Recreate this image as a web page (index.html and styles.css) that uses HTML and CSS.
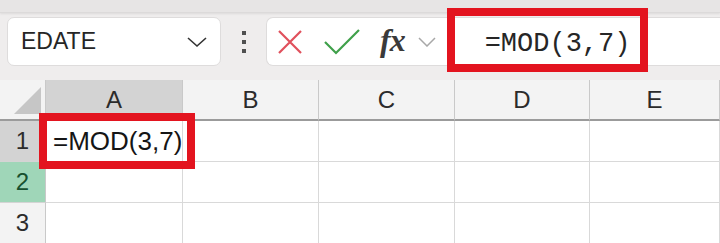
FILE: index.html
```html
<html lang="en">
<head>
    <meta charset="UTF-8">
    <title>Excel MOD</title>
    <link rel="stylesheet" href="styles.css">
</head>
<body>
    <div class="ribbon-edge"></div>

    <div class="toolbar">
        <div class="name-box">
            <span>EDATE</span>
            <svg class="chevron" width="22" height="12" viewBox="0 0 22 12">
                <path d="M2 2 L11 10 L20 2" fill="none" stroke="#333" stroke-width="1.6"/>
            </svg>
        </div>
        <div class="dots"><i></i><i></i><i></i></div>
        <div class="formula-box">
            <svg class="icon" width="26" height="26" viewBox="0 0 26 26">
                <path d="M2 2 L24 24 M24 2 L2 24" stroke="#e0505c" stroke-width="2.2" fill="none"/>
            </svg>
            <svg class="icon check" width="36" height="26" viewBox="0 0 36 26">
                <path d="M1 13 L12 24 L35 1" stroke="#3fa04a" stroke-width="2.2" fill="none"/>
            </svg>
            <span class="fx">fx</span>
            <svg class="small-chev" width="18" height="10" viewBox="0 0 18 10">
                <path d="M1 1 L9 9 L17 1" fill="none" stroke="#a8a8a8" stroke-width="1.5"/>
            </svg>
            <span class="formula-text">=MOD(3,7)</span>
        </div>
        <div class="mark mark-formula"></div>
    </div>

    <div class="sheet">
        <div class="hdr corner"><span class="tri"></span></div>
        <div class="hdr col sel">A</div>
        <div class="hdr col">B</div>
        <div class="hdr col">C</div>
        <div class="hdr col">D</div>
        <div class="hdr col">E</div>

        <div class="hdr row sel">1</div>
        <div class="cell a1"><span>=MOD(3,7)</span><span class="caret"></span></div>
        <div class="cell"></div>
        <div class="cell"></div>
        <div class="cell"></div>
        <div class="cell"></div>

        <div class="hdr row active">2</div>
        <div class="cell"></div>
        <div class="cell"></div>
        <div class="cell"></div>
        <div class="cell"></div>
        <div class="cell"></div>

        <div class="hdr row">3</div>
        <div class="cell"></div>
        <div class="cell"></div>
        <div class="cell"></div>
        <div class="cell"></div>
        <div class="cell"></div>

        <div class="mark mark-cell"></div>
    </div>
</body>
</html>
```

FILE: styles.css
```css
body {
    margin: 0;
    width: 720px;
    height: 243px;
    overflow: hidden;
    background-color: #efeded;
    font-family: "Liberation Sans", Arial, sans-serif;
}
.ribbon-edge {
    height: 12px;
    background-color: #e7e5e5;
    border-bottom: 1px solid #dcdada;
    box-shadow: 0 1px 2px rgba(0, 0, 0, 0.08);
}
.toolbar {
    position: relative;
    display: flex;
    align-items: center;
    height: 49px;
    margin-top: 4px;
    padding-left: 7px;
}
.name-box {
    display: flex;
    align-items: center;
    justify-content: space-between;
    box-sizing: border-box;
    width: 214px;
    height: 49px;
    padding: 0 12px 0 13px;
    background-color: #fff;
    border: 1px solid #dedcdc;
    border-radius: 7px;
    font-size: 23px;
    color: #262626;
}
.dots {
    display: flex;
    flex-direction: column;
    gap: 5px;
    margin: 0 20px 0 21px;
}
.dots i {
    display: block;
    width: 4px;
    height: 4px;
    background-color: #505050;
}
.formula-box {
    display: flex;
    align-items: center;
    flex: 1;
    height: 49px;
    box-sizing: border-box;
    padding-left: 10px;
    background-color: #fff;
    border: 1px solid #dedcdc;
    border-right: none;
    border-radius: 7px 0 0 7px;
}
.icon {
    display: block;
}
.check {
    margin-left: 21px;
}
.fx {
    margin-left: 20px;
    font-family: "Liberation Serif", "Times New Roman", serif;
    font-style: italic;
    font-weight: bold;
    font-size: 32px;
    color: #3a3a3a;
    letter-spacing: -1px;
    line-height: 1;
    margin-top: -4px;
}
.small-chev {
    margin-left: 13px;
}
.formula-text {
    margin-left: 49px;
    padding-top: 5px;
    font-family: "Liberation Mono", "Courier New", monospace;
    font-size: 27px;
    color: #262626;
}
.mark {
    position: absolute;
    box-sizing: border-box;
    border: 8px solid #e3141f;
}
.mark-formula {
    left: 447px;
    top: -9px;
    width: 201px;
    height: 64px;
}
.sheet {
    position: relative;
    display: grid;
    grid-template-columns: 46px 137px 136px 136px 135px 130px;
    grid-template-rows: 41px 41px 41px 41px;
    margin-top: 14px;
    background-color: #fff;
}
.hdr {
    display: flex;
    align-items: center;
    justify-content: center;
    box-sizing: border-box;
    background-color: #f3f3f3;
    color: #2b2b2b;
    font-size: 24px;
}
.col {
    border-right: 1px solid #c9c9c9;
    border-bottom: 2px solid #9b9b9b;
}
.col.sel {
    background-color: #d3d3d3;
}
.row {
    border-bottom: 1px solid #d4d4d4;
    border-right: 1px solid #c9c9c9;
}
.row.sel {
    background-color: #d3d3d3;
}
.row.active {
    background-color: #9fd6b8;
    color: #17502f;
}
.corner {
    position: relative;
    border-bottom: 2px solid #9b9b9b;
    border-right: 1px solid #c9c9c9;
}
.tri {
    position: absolute;
    right: 4px;
    bottom: 5px;
    width: 0;
    height: 0;
    border-left: 27px solid transparent;
    border-bottom: 27px solid #c6c6c6;
}
.cell {
    box-sizing: border-box;
    border-right: 1px solid #d9d9d9;
    border-bottom: 1px solid #d9d9d9;
}
.a1 {
    display: flex;
    align-items: center;
    padding-left: 7px;
    font-size: 26px;
    color: #151515;
}
.caret {
    width: 2px;
    height: 30px;
    margin-left: 2px;
    background-color: #111;
}
.mark-cell {
    left: 39px;
    top: 33px;
    width: 156px;
    height: 56px;
}
```
